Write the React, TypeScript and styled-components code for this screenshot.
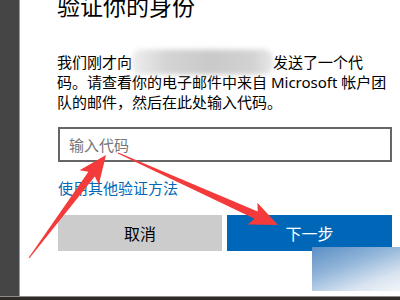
import React from "react";
import styled, { createGlobalStyle } from "styled-components";

const Global = createGlobalStyle`
  html, body { margin: 0; padding: 0; }
  body {
    width: 400px;
    height: 300px;
    overflow: hidden;
    background: #2f2c25;
    font-family: "Noto Sans", "Noto Sans CJK SC", sans-serif;
  }
`;

const Screen = styled.div`
  position: relative;
  width: 400px;
  height: 300px;
  display: flex;
  flex-direction: column;
  overflow: hidden;
`;

const Top = styled.div`
  display: flex;
  height: 296px;
  border-bottom: 1px solid #8c8c8c;
`;

const SideStrip = styled.div`
  width: 19px;
  background: #454545;
  border-right: 1px solid #9a9a9a;
`;

const Dialog = styled.div`
  flex: 1;
  background: #ffffff;
  padding: 0 8px 0 38px;
  display: flex;
  flex-direction: column;
  color: #000;
`;

const Title = styled.h1`
  margin: -9px 0 0 -1px;
  font-size: 23px;
  line-height: 30px;
  font-weight: 400;
  color: #000;
`;

const Paragraph = styled.p`
  margin: 31px 0 0 -1px;
  font-size: 15px;
  line-height: 20px;
  color: #000;
  width: 335px;
`;

const Redacted = styled.span`
  display: inline-block;
  width: 141px;
  height: 20px;
  vertical-align: top;
  background: linear-gradient(90deg, #eeeeee 0%, #d4d4d4 25%, #c9c9c9 55%, #d2d2d2 85%, #e8e8e8 100%);
  filter: blur(2px);
  border-radius: 8px;
  transform: scaleY(1.25);
`;

const CodeInput = styled.div`
  margin-top: 15px;
  height: 31px;
  border: 2px solid #666666;
  display: flex;
  align-items: center;
  padding-left: 9px;
  font-size: 15px;
  color: #767676;
`;

const Link = styled.a`
  margin-top: 16px;
  font-size: 15px;
  line-height: 20px;
  color: #0067b8;
  text-decoration: none;
`;

const Buttons = styled.div`
  margin-top: 17px;
  display: grid;
  grid-template-columns: 164px 165px;
  gap: 5px;
`;

const Button = styled.div<{ $primary?: boolean }>`
  height: 36px;
  display: flex;
  align-items: center;
  justify-content: center;
  font-size: 16px;
  background: ${(p) => (p.$primary ? "#0067b8" : "#cccccc")};
  color: ${(p) => (p.$primary ? "#ffffff" : "#000000")};
`;

const Watermark = styled.div`
  position: absolute;
  left: 312px;
  top: 247px;
  width: 88px;
  height: 44px;
  background: linear-gradient(160deg, #5a8ec4 0%, #93b6da 40%, #d8e4f0 75%, #f3f6f9 100%);
`;

const ArrowLayer = styled.svg`
  position: absolute;
  left: 0;
  top: 0;
  pointer-events: none;
`;

export default function App() {
  return (
    <>
      <Global />
      <Screen>
        <Top>
          <SideStrip />
          <Dialog>
            <Title>验证你的身份</Title>
            <Paragraph>
              我们刚才向<Redacted />发送了一个代码。请查看你的电子邮件中来自 Microsoft 帐户团队的邮件，然后在此处输入代码。
            </Paragraph>
            <CodeInput>输入代码</CodeInput>
            <Link>使用其他验证方法</Link>
            <Buttons>
              <Button>取消</Button>
              <Button $primary>下一步</Button>
            </Buttons>
          </Dialog>
        </Top>
        <Watermark />
        <ArrowLayer width="400" height="300" viewBox="0 0 400 300">
          <polygon
            fill="#f33b3b"
            points="29.4,258.3 94.8,176.6 98.8,184.6 106,155 79.6,170.2 88.4,171.8 28.6,257.7"
          />
          <polygon
            fill="#f33b3b"
            points="117.8,153.5 254.5,218.8 247.6,224.5 278,225 257.4,202.7 257.7,211.6 118.2,152.5"
          />
        </ArrowLayer>
      </Screen>
    </>
  );
}
